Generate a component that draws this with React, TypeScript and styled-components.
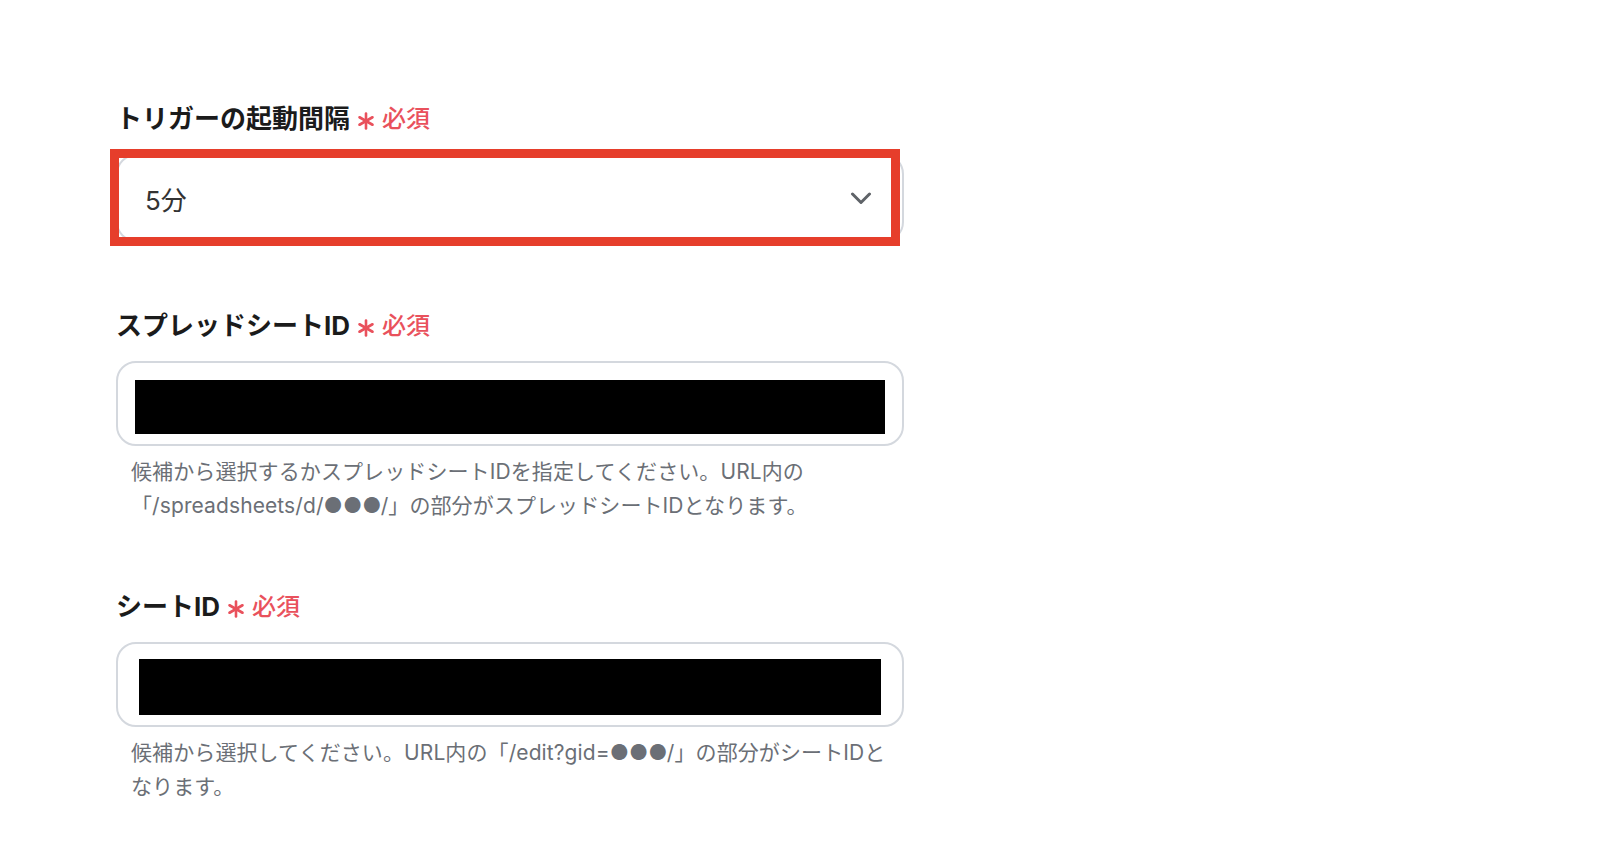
import styled, { createGlobalStyle } from 'styled-components';

const GlobalStyle = createGlobalStyle`
  html, body {
    margin: 0;
    padding: 0;
    background: #ffffff;
  }
  body {
    font-family: "Inter", "Noto Sans CJK JP", sans-serif;
  }
`;

const Page = styled.div`
  display: flex;
  flex-direction: column;
  gap: 63px;
  padding: 98px 0 0 116px;
  width: 788px;
`;

const Field = styled.div`
  display: flex;
  flex-direction: column;
`;

const Label = styled.div`
  display: flex;
  align-items: center;
  gap: 6px;
  height: 36px;
  margin-bottom: 20px;
  font-size: 26px;
  font-weight: 700;
  color: #1b1b1b;
`;

const Required = styled.span`
  display: inline-flex;
  align-items: center;
  gap: 6px;
  color: #e9515c;
  font-size: 24px;
  font-weight: 500;

  svg {
    margin-top: 10px;
  }
`;

const SelectWrap = styled.div`
  position: relative;
`;

const Select = styled.div`
  display: flex;
  align-items: center;
  justify-content: space-between;
  height: 88px;
  box-sizing: border-box;
  padding: 0 30px 0 27px;
  border: 2px solid #d4d8de;
  border-radius: 20px;
  background: #fff;
  font-size: 26px;
  color: #333;
`;

const Highlight = styled.div`
  position: absolute;
  left: -6px;
  top: -5px;
  width: 790px;
  height: 97px;
  box-sizing: border-box;
  border: 9px solid #e63e2b;
  pointer-events: none;
`;

const Input = styled.div<{ $height: number }>`
  display: flex;
  height: ${({ $height }) => $height}px;
  box-sizing: border-box;
  border: 2px solid #d4d8de;
  border-radius: 20px;
  background: #fff;
`;

const Redacted = styled.div<{ $inset: string }>`
  flex: 1;
  margin: ${({ $inset }) => $inset};
  background: #000;
`;

const Help = styled.p`
  margin: 9px 0 0 15px;
  font-size: 21px;
  line-height: 34px;
  color: #6b6f76;
  letter-spacing: 0.1px;
  white-space: nowrap;
`;

const Asterisk = () => (
  <svg width="20" height="18" viewBox="0 0 20 18">
    <g stroke="#e9515c" strokeWidth="2.6" strokeLinecap="round">
      <line x1="10" y1="1.5" x2="10" y2="16.5" />
      <line x1="3.5" y1="5.25" x2="16.5" y2="12.75" />
      <line x1="3.5" y1="12.75" x2="16.5" y2="5.25" />
    </g>
  </svg>
);

const Chevron = () => (
  <svg width="22" height="13" viewBox="0 0 22 13">
    <path d="M2.5 2 L11 10.5 L19.5 2" fill="none" stroke="#5f6368" strokeWidth="3" strokeLinecap="round" strokeLinejoin="round" />
  </svg>
);

const RequiredMark = () => (
  <Required>
    <Asterisk />
    必須
  </Required>
);

export default function App() {
  return (
    <>
      <GlobalStyle />
      <Page>
        <Field>
          <Label>
            トリガーの起動間隔
            <RequiredMark />
          </Label>
          <SelectWrap>
            <Select>
              <span>5分</span>
              <Chevron />
            </Select>
            <Highlight />
          </SelectWrap>
        </Field>

        <Field>
          <Label>
            スプレッドシートID
            <RequiredMark />
          </Label>
          <Input $height={85}>
            <Redacted $inset="17px 17px 10px 17px" />
          </Input>
          <Help>
            候補から選択するかスプレッドシートIDを指定してください。URL内の
            <br />
            「/spreadsheets/d/●●●/」の部分がスプレッドシートIDとなります。
          </Help>
        </Field>

        <Field>
          <Label>
            シートID
            <RequiredMark />
          </Label>
          <Input $height={85}>
            <Redacted $inset="15px 21px 10px 21px" />
          </Input>
          <Help>
            候補から選択してください。URL内の「/edit?gid=●●●/」の部分がシートIDと
            <br />
            なります。
          </Help>
        </Field>
      </Page>
    </>
  );
}
